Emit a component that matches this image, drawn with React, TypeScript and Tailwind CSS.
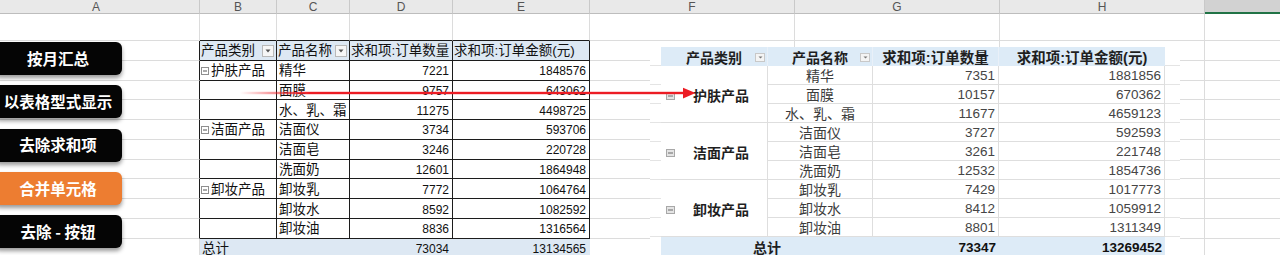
import React from 'react';

const FONT = "font-['Liberation_Sans','Noto_Sans_CJK_SC',sans-serif]";

const COLS = [
  { k: 'A', w: 'w-[200px]' },
  { k: 'B', w: 'w-[77px]' },
  { k: 'C', w: 'w-[73px]' },
  { k: 'D', w: 'w-[103px]' },
  { k: 'E', w: 'w-[137px]' },
  { k: 'F', w: 'w-[205px]' },
  { k: 'G', w: 'w-[205px]' },
  { k: 'H', w: 'w-[205px]' },
];

type Row = { cat?: string; name: string; q: string; a: string };

const LEFT: Row[] = [
  { cat: '护肤产品', name: '精华', q: '7221', a: '1848576' },
  { name: '面膜', q: '9757', a: '643062' },
  { name: '水、乳、霜', q: '11275', a: '4498725' },
  { cat: '洁面产品', name: '洁面仪', q: '3734', a: '593706' },
  { name: '洁面皂', q: '3246', a: '220728' },
  { name: '洗面奶', q: '12601', a: '1864948' },
  { cat: '卸妆产品', name: '卸妆乳', q: '7772', a: '1064764' },
  { name: '卸妆水', q: '8592', a: '1082592' },
  { name: '卸妆油', q: '8836', a: '1316564' },
];

const RIGHT: Row[] = [
  { cat: '护肤产品', name: '精华', q: '7351', a: '1881856' },
  { name: '面膜', q: '10157', a: '670362' },
  { name: '水、乳、霜', q: '11677', a: '4659123' },
  { cat: '洁面产品', name: '洁面仪', q: '3727', a: '592593' },
  { name: '洁面皂', q: '3261', a: '221748' },
  { name: '洗面奶', q: '12532', a: '1854736' },
  { cat: '卸妆产品', name: '卸妆乳', q: '7429', a: '1017773' },
  { name: '卸妆水', q: '8412', a: '1059912' },
  { name: '卸妆油', q: '8801', a: '1311349' },
];

function DropLeft() {
  return (
    <span className="ml-auto mr-[2px] flex h-[12px] w-[12px] shrink-0 items-center justify-center border border-[#b9b9b9] bg-[#f6f6f6]">
      <svg width="6" height="4" viewBox="0 0 6 4">
        <path d="M0.5 0.5H5.5L3 3.5Z" fill="#555" />
      </svg>
    </span>
  );
}

function DropRight() {
  return (
    <span className="mr-[2px] flex h-[9px] w-[10px] shrink-0 items-center justify-center border border-[#c8c8c8] bg-[#f4f4f4]">
      <svg width="5" height="3" viewBox="0 0 5 3">
        <path d="M0.5 0.5H4.5L2.5 2.5Z" fill="#777" />
      </svg>
    </span>
  );
}

function MinusSmall() {
  return (
    <svg width="8" height="8" viewBox="0 0 8 8" className="mr-[2px] shrink-0">
      <rect x="0.5" y="0.5" width="7" height="7" fill="#fff" stroke="#8f8f8f" />
      <path d="M2 4H6" stroke="#555" />
    </svg>
  );
}

function MinusRight() {
  return (
    <svg width="9" height="8" viewBox="0 0 9 8" className="shrink-0">
      <rect x="0.5" y="0.5" width="8" height="7" fill="#e4e4e4" stroke="#a8a8a8" />
      <path d="M2 4H7" stroke="#6a6a6a" />
    </svg>
  );
}

const light = 'border-r border-b border-[#dcdcdc]';

function SheetRow({ r }: { r: number }) {
  const inTable = r >= 1 && r <= 10;
  const h = r === 0 ? 'h-[27px]' : 'h-[19.78px]';
  const aCls = inTable ? 'border-r border-b border-[#dcdcdc] border-r-[#1c1c1c]' : light;

  let b: React.ReactNode = null;
  let c: React.ReactNode = null;
  let d: React.ReactNode = null;
  let e: React.ReactNode = null;
  let tCls = light;
  let bg = '';

  if (r === 0) {
    tCls = 'border-r border-b border-[#dcdcdc] border-b-[#1c1c1c]';
  } else if (r === 1) {
    tCls = 'border-r border-b border-[#1c1c1c]';
    bg = 'bg-[#dde8f3]';
    b = (
      <>
        <span className="pl-[1px]">产品类别</span>
        <DropLeft />
      </>
    );
    c = (
      <>
        <span className="pl-[1px]">产品名称</span>
        <DropLeft />
      </>
    );
    d = <span className="pl-[1px]">求和项:订单数量</span>;
    e = <span className="pl-[1px]">求和项:订单金额(元)</span>;
  } else if (r <= 10) {
    tCls = 'border-r border-b border-[#1c1c1c]';
    const row = LEFT[r - 2];
    b = row.cat ? (
      <span className="flex items-center pl-[1px]">
        <MinusSmall />
        {row.cat}
      </span>
    ) : null;
    c = <span className="pl-[2px]">{row.name}</span>;
    d = <span className="ml-auto pr-[3px] text-[12px]">{row.q}</span>;
    e = <span className="ml-auto pr-[3px] text-[12px]">{row.a}</span>;
  } else {
    tCls = 'border-r border-b border-[#dde8f3] border-b-[#dcdcdc]';
    bg = 'bg-[#dde8f3]';
    b = <span className="pl-[2px]">总计</span>;
    d = <span className="ml-auto pr-[3px] text-[12px]">73034</span>;
    e = <span className="ml-auto pr-[3px] text-[12px]">13134565</span>;
  }

  const cell = `flex items-center pt-[2px] text-[13.5px] leading-[16px] text-[#111] whitespace-nowrap overflow-hidden ${tCls} ${bg}`;

  return (
    <div className={`flex ${h} shrink-0`}>
      <div className={`w-[200px] shrink-0 ${aCls}`} />
      <div className={`w-[77px] shrink-0 ${cell}`}>{b}</div>
      <div className={`w-[73px] shrink-0 ${cell}`}>{c}</div>
      <div className={`w-[103px] shrink-0 ${cell}`}>{d}</div>
      <div className={`w-[137px] shrink-0 ${cell}`}>{e}</div>
      <div className={`w-[205px] shrink-0 ${light}`} />
      <div className={`w-[205px] shrink-0 ${light}`} />
      <div className={`w-[205px] shrink-0 ${light}`} />
      <div className="flex-1 border-b border-[#dcdcdc]" />
    </div>
  );
}

function RightTable() {
  const line = 'border-b border-r border-[#dedede]';
  const strip = 'border-b border-[#e4e4e4]';
  const cells: React.ReactNode[] = [];
  cells.push(<div key="hs1" className={strip} />);
  cells.push(
    <div key="h1" className="flex items-center bg-[#ddebf7] border-r border-[#e9f0f8] pt-[2px]">
      <span className="w-[12px] shrink-0" />
      <span className="flex-1 text-center">产品类别</span>
      <DropRight />
    </div>
  );
  cells.push(
    <div key="h2" className="flex items-center bg-[#ddebf7] border-r border-[#e9f0f8] pt-[2px]">
      <span className="w-[12px] shrink-0" />
      <span className="flex-1 text-center">产品名称</span>
      <DropRight />
    </div>
  );
  cells.push(
    <div key="h3" className="flex items-center justify-center bg-[#ddebf7] border-r border-[#e9f0f8] pt-[2px] text-[14.5px]">
      求和项:订单数量
    </div>
  );
  cells.push(
    <div key="h4" className="flex items-center justify-center bg-[#ddebf7] pt-[2px] text-[14.5px]">
      求和项:订单金额(元)
    </div>
  );
  cells.push(<div key="hs2" className={strip} />);

  RIGHT.forEach((row, i) => {
    cells.push(<div key={`s1${i}`} className={strip} />);
    if (row.cat) {
      cells.push(
        <div key={`c${i}`} className="row-span-3 flex items-center pl-[5px] pt-[4px] border-b border-r border-[#dedede]">
          <MinusRight />
          <span className="flex-1 text-center font-bold text-[#1f1f1f]">{row.cat}</span>
        </div>
      );
    }
    cells.push(
      <div key={`n${i}`} className={`flex items-center justify-center pt-[2px] font-normal text-[#3c3c3c] ${line}`}>
        {row.name}
      </div>
    );
    cells.push(
      <div key={`q${i}`} className={`flex items-center justify-end pr-[3px] pt-[2px] font-normal text-[13.5px] text-[#454545] ${line}`}>
        {row.q}
      </div>
    );
    cells.push(
      <div key={`a${i}`} className={`flex items-center justify-end pr-[3px] pt-[2px] font-normal text-[13.5px] text-[#454545] ${line}`}>
        {row.a}
      </div>
    );
    cells.push(<div key={`s2${i}`} className={strip} />);
  });

  cells.push(<div key="ts1" />);
  cells.push(
    <div key="t1" className="col-span-2 flex items-center justify-center bg-[#ddebf7] pt-[2px]">
      总计
    </div>
  );
  cells.push(
    <div key="t2" className="flex items-center justify-end bg-[#ddebf7] pr-[3px] pt-[2px] text-[13.5px] text-[#111]">
      73347
    </div>
  );
  cells.push(
    <div key="t3" className="flex items-center justify-end bg-[#ddebf7] pr-[3px] pt-[2px] text-[13.5px] text-[#111]">
      13269452
    </div>
  );
  cells.push(<div key="ts2" />);

  return (
    <div
      className={`absolute left-[650px] top-[47px] grid grid-cols-[11px_107px_105px_126px_166px_15px] grid-rows-[repeat(11,19px)] bg-white text-[14px] leading-[16px] font-bold text-[#1f1f1f] whitespace-nowrap ${FONT}`}
    >
      {cells}
    </div>
  );
}

const BUTTONS = [
  { t: '按月汇总', c: 'bg-[#050505]' },
  { t: '以表格型式显示', c: 'bg-[#050505]' },
  { t: '去除求和项', c: 'bg-[#050505]' },
  { t: '合并单元格', c: 'bg-[#ed7d31]' },
  { t: '去除 - 按钮', c: 'bg-[#050505]' },
];

export default function App() {
  return (
    <div className={`relative h-[255px] w-[1280px] overflow-hidden bg-white ${FONT}`}>
      <div className="flex h-[14px] bg-[#e9e9e9]">
        {COLS.map((col) => (
          <div
            key={col.k}
            className={`${col.w} shrink-0 flex items-center justify-center border-r border-b border-[#c9c9c9] border-b-[#bdbdbd] text-[12px] leading-none text-[#555] font-['Liberation_Sans',sans-serif] ${col.k === 'A' ? 'pr-[7px]' : ''}`}
          >
            {col.k}
          </div>
        ))}
        <div className="flex-1 border-b-2 border-[#217346] bg-[#d2d2d2]" />
      </div>

      <div className="flex flex-col">
        {Array.from({ length: 12 }).map((_, r) => (
          <SheetRow key={r} r={r} />
        ))}
      </div>

      <div className="absolute left-[-6px] top-[42px] flex w-[128px] flex-col gap-[10.25px]">
        {BUTTONS.map((b) => (
          <div
            key={b.t}
            className={`flex h-[33px] items-center justify-center rounded-[6px] ${b.c} shadow-[0_3px_4px_rgba(0,0,0,0.4)] font-['Noto_Sans_CJK_SC',sans-serif] text-[15.5px] font-bold leading-none text-white whitespace-nowrap`}
          >
            {b.t}
          </div>
        ))}
      </div>

      <RightTable />

      <svg className="pointer-events-none absolute left-0 top-0" width="1280" height="255" viewBox="0 0 1280 255">
        <defs>
          <linearGradient id="arw" x1="240" x2="310" y1="0" y2="0" gradientUnits="userSpaceOnUse">
            <stop offset="0" stopColor="#ec1c24" stopOpacity="0" />
            <stop offset="1" stopColor="#ec1c24" stopOpacity="1" />
          </linearGradient>
        </defs>
        <rect x="240" y="91.8" width="445" height="2.4" fill="url(#arw)" />
        <path d="M683 87.8L695.5 93L683 98.5Z" fill="#ec1c24" />
      </svg>
    </div>
  );
}
